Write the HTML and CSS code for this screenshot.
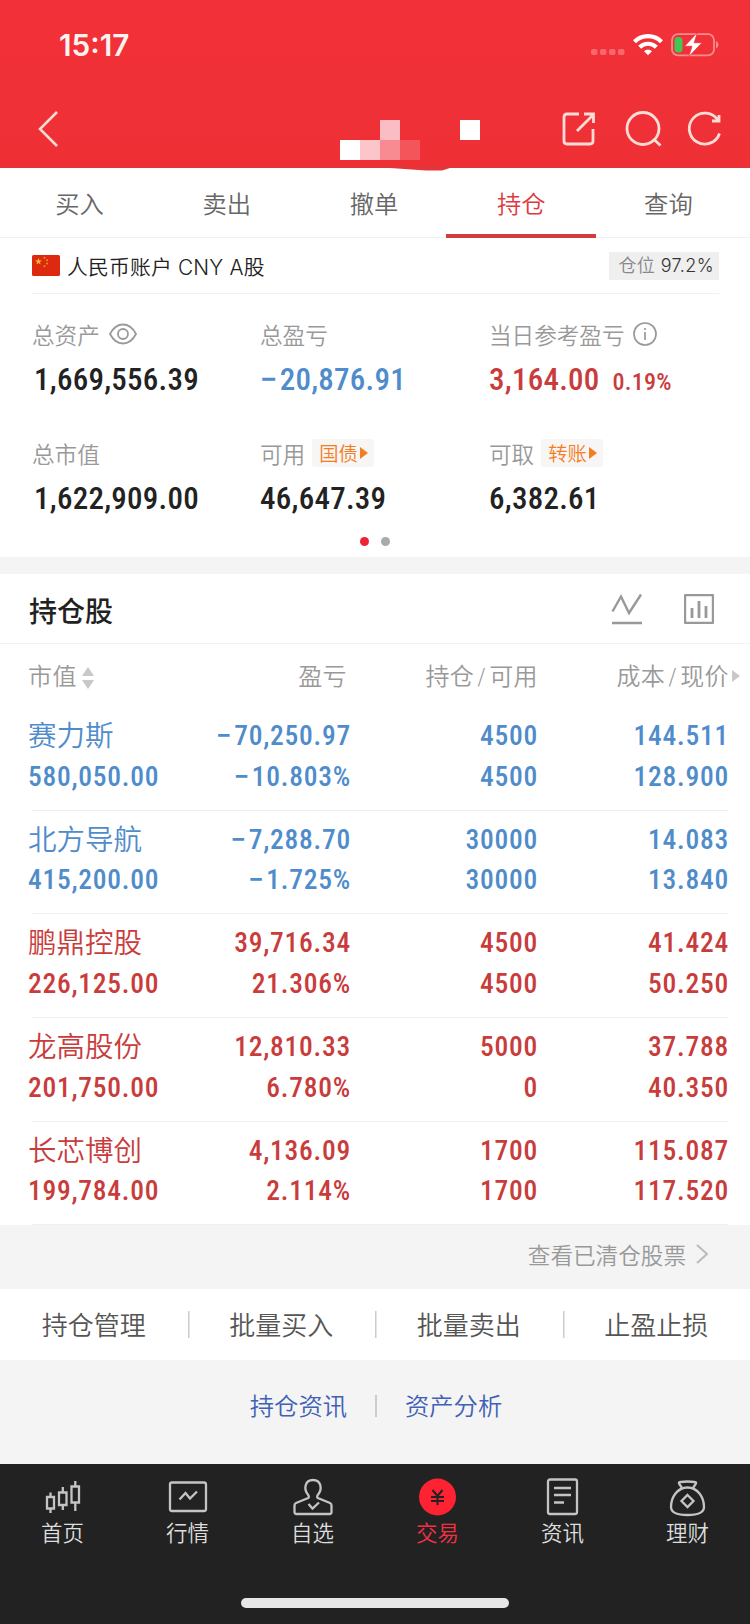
FILE: index.html
```
<!DOCTYPE html>
<html lang="zh-CN">
  <head>
    <meta charset="UTF-8" />
    <meta name="viewport" content="width=device-width, initial-scale=1.0" />
    <title>持仓</title>
    <link rel="stylesheet" href="styles.css">
  </head>
  <body>
    <header class="header">
      <div class="status-bar">
        <span class="time">15:17</span>
        <svg class="status-icons" width="130" height="26" viewBox="0 0 130 26">
          <g fill="#f9686c">
            <rect x="0" y="16" width="6.5" height="6" rx="2" />
            <rect x="9" y="16" width="6.5" height="6" rx="2" />
            <rect x="18" y="16" width="6.5" height="6" rx="2" />
            <rect x="27" y="16" width="6.5" height="6" rx="2" />
          </g>
          <g fill="none" stroke="#fff" stroke-width="4.2">
            <path d="M43.5 8.8a19 19 0 0 1 27 0" />
            <path d="M48.7 14.2a11.7 11.7 0 0 1 16.6 0" />
          </g>
          <path d="M57 22.2l-4-4a5.6 5.6 0 0 1 8 0z" fill="#fff" />
          <rect x="81" y="1.2" width="42" height="21.2" rx="6" fill="none" stroke="#f88c8f" stroke-width="1.8" />
          <path d="M125 8v7.5q2.5-1 2.5-3.7t-2.5-3.8z" fill="#f88c8f" />
          <rect x="83.5" y="4" width="8" height="15.5" rx="3.5" fill="#42c655" />
          <path d="M106.500-.5L93.500 13.300h7.500l-3.500 10.700L111 9.700h-7.800z" fill="#fff" stroke="#f13038" stroke-width=".8" />
        </svg>
      </div>
      <div class="nav-bar">
        <svg class="back" width="24" height="38" viewBox="0 0 24 38">
          <path d="M20 2L3 19l17 17" fill="none" stroke="#ffd9d2" stroke-width="2.6" />
        </svg>
        <svg class="nav-title" width="140" height="40" viewBox="0 0 140 40" shape-rendering="crispEdges">
          <rect x="0" y="20" width="20" height="20" fill="#fff" />
          <rect x="20" y="20" width="20" height="20" fill="#fcc5c9" />
          <rect x="40" y="0" width="20" height="20" fill="#fabdc3" />
          <rect x="40" y="20" width="20" height="20" fill="#f88b91" />
          <rect x="60" y="20" width="20" height="20" fill="#f3555b" />
          <rect x="120" y="0" width="20" height="20" fill="#fff" />
        </svg>
        <div class="nav-actions">
          <svg width="34" height="36" viewBox="0 0 34 36" fill="none" stroke="#ffdcd6" stroke-width="2.8">
            <path d="M17 3H5Q2 3 2 6v24q0 3 3 3h23q3 0 3-3V18" />
            <path d="M15 20L31 4M22 3h9.500v9" />
          </svg>
          <svg width="37" height="36" viewBox="0 0 37 36" fill="none" stroke="#ffdcd6" stroke-width="2.8">
            <circle cx="18" cy="17.5" r="16" />
            <path d="M28.500 28l7 6.500" />
          </svg>
          <svg width="36" height="36" viewBox="0 0 36 36" fill="none" stroke="#ffdcd6" stroke-width="2.8">
            <path d="M32.500 22.500A15.500 15.500 0 1 1 31 9.500" />
            <path d="M25 10h7V4" />
          </svg>
        </div>
      </div>
      <svg class="header-edge" width="140" height="3" viewBox="0 0 140 3">
        <path d="M0 0h140l-8 2.500h-16L80 0z" fill="#e4353a" />
      </svg>
    </header>

    <nav class="tabs">
      <a class="tab">买入</a>
      <a class="tab">卖出</a>
      <a class="tab">撤单</a>
      <a class="tab active">持仓</a>
      <a class="tab">查询</a>
    </nav>

    <section class="account">
      <div class="account-head">
        <svg class="flag" width="28" height="21" viewBox="0 0 28 21">
          <rect width="28" height="21" rx="1.5" fill="#dc2910" />
          <path d="M6.500 3l.9 2.500h2.700L7.900 7.100l.8 2.500-2.200-1.500-2.200 1.500.8-2.500-2.200-1.600h2.700z" fill="#fbc02a" />
          <g fill="#f0901f">
            <circle cx="12.5" cy="2.8" r="1" />
            <circle cx="15" cy="5.2" r="1" />
            <circle cx="15" cy="8.6" r="1" />
            <circle cx="12.5" cy="11.2" r="1" />
          </g>
        </svg>
        <span class="account-name">人民币账户 CNY A股</span>
        <span class="position"><span>仓位</span> 97.2%</span>
      </div>

      <div class="assets">
        <div class="asset">
          <div class="label">总资产
            <svg class="eye" width="28" height="22" viewBox="0 0 28 22" fill="none" stroke="#9a9a9a" stroke-width="1.8">
              <path d="M1 11Q6 1.500 14 1.500T27 11Q22 20.500 14 20.500T1 11z" />
              <circle cx="14" cy="11" r="5" />
            </svg>
          </div>
          <div class="value indent">1,669,556.39</div>
        </div>
        <div class="asset">
          <div class="label">总盈亏</div>
          <div class="value down"><span class="minus">−</span>20,876.91</div>
        </div>
        <div class="asset">
          <div class="label">当日参考盈亏
            <svg class="info" width="24" height="24" viewBox="0 0 24 24" fill="none" stroke="#999" stroke-width="1.7">
              <circle cx="12" cy="12" r="11" />
              <path d="M12 6v2M12 10v8" />
            </svg>
          </div>
          <div class="value up">3,164.00<small>0.19%</small></div>
        </div>
        <div class="asset">
          <div class="label">总市值</div>
          <div class="value indent">1,622,909.00</div>
        </div>
        <div class="asset">
          <div class="label">可用<span class="tag">国债<i></i></span></div>
          <div class="value">46,647.39</div>
        </div>
        <div class="asset">
          <div class="label">可取<span class="tag">转账<i></i></span></div>
          <div class="value">6,382.61</div>
        </div>
      </div>
      <div class="dots"><i class="on"></i><i></i></div>
    </section>

    <section class="holdings">
      <div class="holdings-head">
        <h2>持仓股</h2>
        <svg width="32" height="32" viewBox="0 0 32 32" fill="none" stroke="#999" stroke-width="2.4">
          <path d="M1.500 18.500L10 3.500l8 16.500L30 1.500M1 30h30" />
        </svg>
        <svg width="30" height="30" viewBox="0 0 30 30" fill="none" stroke="#999" stroke-width="2.4">
          <rect x="1" y="1" width="28" height="28" rx="1" />
          <path d="M8 14v10M15 7v17M22 12v12" stroke-width="2.8" />
        </svg>
      </div>

      <div class="row row-head">
        <span class="sortable">市值
          <svg width="12" height="22" viewBox="0 0 12 22" fill="#c8c8c8"><path d="M6 0l6 9H0zM0 13h12l-6 9z" /></svg>
        </span>
        <span class="profit-title">盈亏</span>
        <span>持仓<b>/</b>可用</span>
        <span class="more">成本<b>/</b>现价</span>
      </div>

      <div class="row down">
        <div><strong>赛力斯</strong>580,050.00</div>
        <div><span class="minus">−</span>70,250.97<br><span class="minus">−</span>10.803%</div>
        <div>4500<br>4500</div>
        <div>144.511<br>128.900</div>
      </div>
      <div class="row down">
        <div><strong>北方导航</strong>415,200.00</div>
        <div><span class="minus">−</span>7,288.70<br><span class="minus">−</span>1.725%</div>
        <div>30000<br>30000</div>
        <div>14.083<br>13.840</div>
      </div>
      <div class="row up">
        <div><strong>鹏鼎控股</strong>226,125.00</div>
        <div>39,716.34<br>21.306%</div>
        <div>4500<br>4500</div>
        <div>41.424<br>50.250</div>
      </div>
      <div class="row up">
        <div><strong>龙高股份</strong>201,750.00</div>
        <div>12,810.33<br>6.780%</div>
        <div>5000<br>0</div>
        <div>37.788<br>40.350</div>
      </div>
      <div class="row up">
        <div><strong>长芯博创</strong>199,784.00</div>
        <div>4,136.09<br>2.114%</div>
        <div>1700<br>1700</div>
        <div>115.087<br>117.520</div>
      </div>
    </section>

    <div class="cleared">
      查看已清仓股票
      <svg width="12" height="20" viewBox="0 0 12 20"><path d="M1 1l10 9-10 9" fill="none" stroke="#bbb" stroke-width="2" /></svg>
    </div>

    <div class="actions">
      <a>持仓管理</a>
      <a>批量买入</a>
      <a>批量卖出</a>
      <a>止盈止损</a>
    </div>

    <div class="links">
      <a>持仓资讯</a>
      <a>资产分析</a>
    </div>

    <footer class="tab-bar">
      <a>
        <svg width="40" height="40" viewBox="0 0 40 40" fill="none" stroke="#c4c4c4" stroke-width="2.3">
          <path d="M4 20h7v11.500H4zM7.500 15.500V20M7.500 31.500V36M16 15.500h7.500V28H16zM19.800 10v5.500M19.800 28v5M28.500 9.500h7.500v16h-7.500zM32.300 4v5.500M32.300 25.500V34" />
        </svg>
        首页
      </a>
      <a>
        <svg width="40" height="40" viewBox="0 0 40 40" fill="none" stroke="#c4c4c4" stroke-width="2.3">
          <rect x="2" y="5.5" width="36" height="28.5" rx="2" />
          <path d="M11.500 22.500l6-6.500 4.500 5.500 7-7" />
        </svg>
        行情
      </a>
      <a>
        <svg width="40" height="40" viewBox="0 0 40 40" fill="none" stroke="#c4c4c4" stroke-width="2.3">
          <path d="M15.500 18.500C10 12 12 3 20 3s10 9 4.500 15.500c-1 2 0 2.500 1.500 3l11 4.500q1.500.7 1.500 2.500v6.500q0 2-2 2h-33q-2 0-2-2v-6.500q0-1.800 1.500-2.500l11-4.500c1.500-.5 2.500-1 1.500-3z" />
          <path d="M15.500 27l4 4.500 6.500-6" />
        </svg>
        自选
      </a>
      <a class="current">
        <svg width="40" height="40" viewBox="0 0 40 40">
          <circle cx="19.5" cy="20" r="18.5" fill="#ff2233" />
          <path d="M14.500 13l5 6 5-6M13 20h13M13 24h13M19.500 19v9" fill="none" stroke="#222" stroke-width="2" />
        </svg>
        交易
      </a>
      <a>
        <svg width="40" height="40" viewBox="0 0 40 40" fill="none" stroke="#c4c4c4" stroke-width="2.3">
          <rect x="5" y="2.5" width="29" height="34.5" rx="2" />
          <path d="M11 11H28M11 18H28M11 25.500h10" />
        </svg>
        资讯
      </a>
      <a>
        <svg width="40" height="40" viewBox="0 0 40 40" fill="none" stroke="#c4c4c4" stroke-width="2.3">
          <path d="M14 11L11 6.500q-.5-1.500 1.500-1.500 7-1 14 0 2 0 1.500 1.500L25 11" />
          <path d="M19.500 10.500C9.500 10.500 3 20 3 30q0 8 16.500 8T36 30c0-10-6.500-19.500-16.500-19.500z" />
          <path d="M19.500 18l6 6-6 6-6-6z" />
        </svg>
        理财
      </a>
      <div class="home-indicator"></div>
    </footer>
  </body>
</html>
```
FILE: styles.css
```
* {
  box-sizing: border-box;
}

body {
  margin: 0;
  width: 750px;
  height: 1624px;
  overflow: hidden;
  background: #f4f4f4;
  color: #222;
  font-family: Inter, "Noto Sans CJK SC", sans-serif;
  font-weight: 350;
}

svg {
  display: block;
  flex: none;
}

/* Header */
.header {
  position: relative;
  height: 168px;
  background: linear-gradient(#f23039, #ee3035);
  border-bottom: 2px solid #e4353a;
}

/* small bulge that hangs over the tabs */
.header-edge {
  position: absolute;
  left: 310px;
  top: 168px;
}

.status-bar {
  display: flex;
  justify-content: space-between;
  align-items: center;
  height: 90px;
  padding: 0 29px 0 59px;
}

.time {
  font-size: 29.7px;
  font-weight: 600;
  color: #fff3f1;
}

.status-icons {
  margin-top: 1px;
}

.nav-bar {
  display: grid;
  grid-template-columns: 340px 1fr auto;
  align-items: center;
  height: 78px;
  padding-right: 27px;
}

.back {
  margin-left: 37px;
}

.nav-title {
  margin-top: 22px;
}

.nav-actions {
  display: flex;
  gap: 27px;
}

.nav-actions svg:nth-child(2) {
  margin-left: 2px;
  margin-right: -2px;
}

/* Tabs */
.tabs {
  display: flex;
  height: 70px;
  padding: 0 8px 0 6px;
  background: #fff;
  border-bottom: 1px solid #f1f1f1;
}

.tab {
  position: relative;
  flex: 1;
  text-align: center;
  font-size: 24.3px;
  line-height: 73px;
  color: #666;
}

.tab.active {
  color: #e0393e;
}

.tab.active::after {
  content: "";
  position: absolute;
  left: -2px;
  right: -1px;
  bottom: -1px;
  height: 4px;
  background: #d23c3f;
}

/* Account summary */
.account {
  height: 319px;
  padding: 0 31px 0 32px;
  background: #fff;
}

.account-head {
  display: flex;
  align-items: center;
  height: 56px;
  border-bottom: 1px solid #f1f1f1;
}

.account-name {
  margin-left: 7px;
  font-size: 20.8px;
  letter-spacing: 0.2px;
  color: #222;
}

.position {
  margin-left: auto;
  padding: 0 5px 0 9px;
  background: #efefef;
  font-size: 18px;
  line-height: 28px;
  letter-spacing: 0.4px;
  color: #333;
}

.position span {
  color: #888;
}

.assets {
  display: grid;
  grid-template-columns: 228px 229px 1fr;
  grid-template-rows: 119px 100px;
  padding-top: 24px;
}

.label {
  display: flex;
  align-items: center;
  height: 32px;
  font-size: 22.6px;
  color: #999;
}

.eye {
  margin-left: 9px;
}

.info {
  margin-left: 8px;
}

.tag {
  display: flex;
  align-items: center;
  margin-left: 7px;
  padding: 0 6px 0 7px;
  height: 28px;
  border-radius: 3px;
  background: #f7f6f4;
  font-size: 19.3px;
  color: #f47d1f;
}

.tag i {
  margin-left: 2px;
  border: 6px solid transparent;
  border-left: 8px solid #f47d1f;
  border-right: 0;
}

.value {
  height: 50px;
  padding-top: 4px;
  font-family: Roboto, sans-serif;
  font-size: 31px;
  font-weight: 480;
  font-stretch: 87.5%;
  line-height: 52px;
  letter-spacing: 0.25px;
}

.value.indent {
  padding-left: 2px;
}

.value small {
  margin-left: 13px;
  font-size: 24px;
}

.minus {
  margin-right: 2px;
  font-stretch: 100%;
}

.value.down,
.row.down {
  color: #4f8ccb;
}

.value.up,
.row.up {
  color: #c93c3c;
}

.dots {
  display: flex;
  justify-content: center;
  gap: 12px;
  padding-right: 1px;
}

.dots i {
  width: 9px;
  height: 9px;
  border-radius: 50%;
  background: #aaa;
}

.dots .on {
  background: #ec2436;
}

/* Holdings list */
.holdings {
  margin-top: 17px;
  background: #fff;
}

.holdings-head {
  display: flex;
  align-items: center;
  gap: 41px;
  height: 70px;
  padding: 0 36px 0 29px;
  border-bottom: 1px solid #f3f3f3;
}

.holdings-head h2 {
  flex: 1;
  margin: 2px 0 0;
  font-size: 28px;
  font-weight: 500;
}

.row {
  display: grid;
  grid-template-columns: 170px 153px 187px 191px;
  height: 103.7px;
  padding: 9px 0 0 28px;
  font-family: Roboto, "Noto Sans CJK SC", sans-serif;
  font-size: 27.5px;
  font-weight: 480;
  font-stretch: 87.5%;
  line-height: 40.5px;
  letter-spacing: 0.75px;
  text-align: right;
  background: linear-gradient(#eee, #eee) 32px 100% / 696px 1px no-repeat;
}

.row > :first-child {
  text-align: left;
}

.row strong {
  display: block;
  height: 40.5px;
  padding-top: 1px;
  font-size: 28.5px;
  font-weight: 350;
  letter-spacing: 0;
}

.row-head {
  height: 63px;
  padding-top: 13px;
  background: none;
  font-size: 24px;
  font-weight: 350;
  letter-spacing: 0.4px;
  color: #999;
}

.row-head b {
  margin: 0 3px;
  font-weight: 350;
}

.sortable {
  display: flex;
  align-items: center;
  gap: 5px;
  height: 41px;
}

.profit-title {
  padding-right: 4px;
}

.more {
  position: relative;
}

.more::after {
  content: "";
  position: absolute;
  right: -11px;
  top: 13px;
  border: 6px solid transparent;
  border-left: 8px solid #c8c8c8;
  border-right: 0;
}

.cleared {
  display: flex;
  justify-content: flex-end;
  align-items: center;
  gap: 10px;
  height: 64px;
  padding: 0 42px 6px 0;
  font-size: 22.6px;
  color: #999;
}

.actions {
  display: flex;
  height: 71px;
  background: #fff;
}

.actions a {
  flex: 1;
  text-align: center;
  font-size: 26px;
  line-height: 73px;
  color: #555;
}

.actions a + a {
  background: linear-gradient(#ccc, #ccc) 0 22px / 1.5px 27px no-repeat;
}

.links {
  display: flex;
  justify-content: center;
  height: 104px;
  padding-left: 2px;
  font-size: 24.3px;
  line-height: 92px;
  color: #4061b5;
}

.links a {
  padding: 0 28px;
}

.links a + a {
  padding-left: 30px;
  background: linear-gradient(#ccc, #ccc) 0 35px / 2px 22px no-repeat;
}

/* Bottom bar */
.tab-bar {
  display: grid;
  grid-template-columns: repeat(6, 1fr);
  grid-template-rows: 134px 10px;
  height: 160px;
  background: #222;
}

.tab-bar a {
  display: flex;
  flex-direction: column;
  align-items: center;
  padding-top: 13px;
  font-size: 21.5px;
  line-height: 33px;
  color: #ddd;
}

.tab-bar .current {
  color: #f23145;
}

.home-indicator {
  grid-column: 1 / -1;
  justify-self: center;
  width: 268px;
  border-radius: 5px;
  background: #e6e6e6;
}
```
